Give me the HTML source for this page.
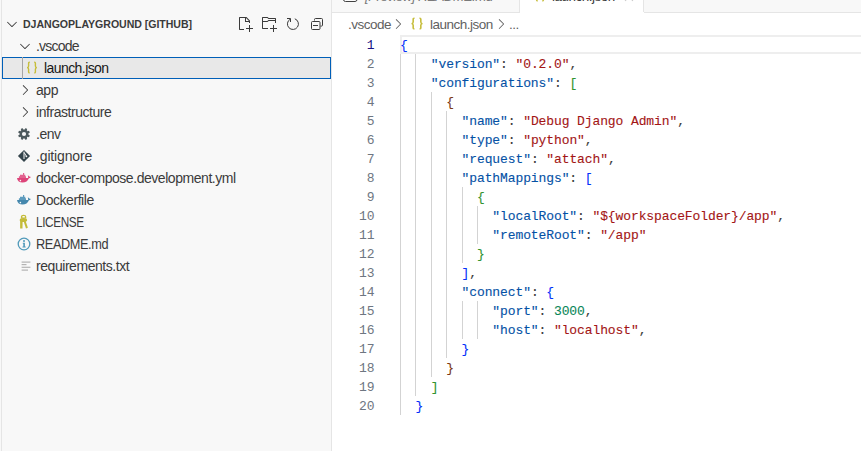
<!DOCTYPE html>
<html><head><meta charset="utf-8">
<style>
*{margin:0;padding:0;box-sizing:border-box}
html,body{width:861px;height:451px;overflow:hidden;background:#fff}
body{position:relative;font-family:"Liberation Sans",sans-serif}
#side{position:absolute;left:0;top:0;width:331px;height:451px;background:#f8f8f8}
.lb{position:absolute;left:1px;top:0;width:1px;height:451px;background:#e5e5e5}
.rb{position:absolute;left:331px;top:0;width:1px;height:451px;background:#e5e5e5}
.row{position:absolute;left:0;width:331px;height:22px;font-size:13px;color:#3b3b3b;line-height:22px;white-space:nowrap}
.t{position:absolute;top:0}
.row .t{font-size:14px;letter-spacing:-0.45px}
.hdr .t{font-size:10.6px;letter-spacing:-0.05px;top:1px}
.hdr{font-weight:bold;font-size:10.6px;letter-spacing:-0.05px}
#sel{position:absolute;left:2px;top:57px;width:329px;height:22px;background:#e8e8e8;border:1px solid #005fb8}
.tg{position:absolute;left:22px;width:1px;background:#a5a5a5}
.abs{position:absolute}
.tabbar{position:absolute;top:0;height:13px;background:#f8f8f8;border-bottom:1px solid #e5e5e5}
.tabt{position:absolute;font-size:13.5px;letter-spacing:-0.2px;white-space:nowrap;line-height:normal}
.ln{position:absolute;margin-top:1px;left:334px;width:40.4px;text-align:right;font-family:"Liberation Mono",monospace;font-size:13px;color:#6e7681;letter-spacing:-0.103px;line-height:19px;height:19px}
.act{color:#171184}
.cl{position:absolute;margin-top:1px;-webkit-text-stroke:0.1px currentColor;font-family:"Liberation Mono",monospace;font-size:13px;letter-spacing:-0.103px;line-height:19px;height:19px;white-space:pre;color:#3b3b3b}
.g{position:absolute;width:1px;background:#d3d3d3}
.hl{position:absolute;border:2px solid #eeeeee;border-right:none}
.k{color:#0451a5}.s{color:#a31515}.n{color:#098658}
.b1{color:#0431fa}.b2{color:#319331}.b3{color:#7b3814}
.bc{position:absolute;top:14px;height:22px;line-height:22px;font-size:13.5px;letter-spacing:-0.5px;color:#616161;white-space:nowrap}
.ic{position:absolute}

</style></head><body>
<div id="side">
<div class="lb"></div>
<div id="sel"></div>
<div class="tg" style="top:57px;height:22px"></div>
<svg class="ic" style="left:4px;top:16px" width="16" height="16" viewBox="0 0 16 16"><path fill="#3b3b3b" d="M7.976 10.072l4.357-4.357.62.618L8.284 11h-.618L3 6.333l.619-.618 4.357 4.357z"/></svg>
<div class="row hdr" style="top:12px"><span class="t" style="left:23px">DJANGOPLAYGROUND [GITHUB]</span></div>
<svg class="ic" style="left:237px;top:16px" width="16" height="16" viewBox="0 0 16 16"><path fill="#3b3b3b" d="M9.5 1.1l3.4 3.5.1.4v2h-1V6H8V2H3v11h4v1H2.5l-.5-.5v-12l.5-.5h6.7l.3.1zM9 2v3h2.9L9 2zm4 14h-1v-3H9v-1h3V9h1v3h3v1h-3v3z"/></svg>
<svg class="ic" style="left:261px;top:16px" width="16" height="16" viewBox="0 0 16 16"><path fill="#3b3b3b" d="M14.5 2H7.71l-.85-.85L6.51 1h-5l-.5.5v11l.5.5H7v-1H1.99V6h4.49l.35-.15.86-.86H14v1.5l-.001.51h1.011V2.5L14.5 2zm-.51 2h-6.5l-.35.15-.86.86H2v-3h4.29l.85.85.36.15H14l-.01.99zM13 16h-1v-3H9v-1h3V9h1v3h3v1h-3v3z"/></svg>
<svg class="ic" style="left:285px;top:16px" width="16" height="16" viewBox="0 0 16 16"><path fill="none" stroke="#3b3b3b" stroke-width="1" d="M5.2 3.2 A5.5 5.5 0 1 0 9.8 2.8"/><path fill="none" stroke="#3b3b3b" stroke-width="1" d="M2 2.5H5.5V6"/></svg>
<svg class="ic" style="left:309px;top:16px" width="16" height="16" viewBox="0 0 16 16"><path fill="none" stroke="#3b3b3b" stroke-width="1" d="M5.5 4.5V3.5a1 1 0 0 1 1-1h6a1 1 0 0 1 1 1v5.6a1 1 0 0 1-1 1H11.5"/><rect x="2.5" y="5.5" width="8.5" height="8" rx="1" fill="none" stroke="#3b3b3b"/><path fill="#3b3b3b" d="M4 9h5v1H4z"/></svg>

<svg class="ic" style="left:17px;top:38px" width="16" height="16" viewBox="0 0 16 16"><path fill="#3b3b3b" d="M7.976 10.072l4.357-4.357.62.618L8.284 11h-.618L3 6.333l.619-.618 4.357 4.357z"/></svg>
<div class="row" style="top:35px"><span class="t" style="left:36px;letter-spacing:-0.78px">.vscode</span></div>
<svg class="ic" style="left:24px;top:60px" width="16" height="16" viewBox="0 0 16 16"><path fill="none" stroke="#c6bd3a" stroke-width="1.4" d="M5.8 2.3h-.3c-.6 0-.9.4-.9 1v2.6c0 .9-.4 1.5-1.4 1.7 1 .2 1.4.8 1.4 1.7v2.6c0 .6.3 1 .9 1h.3M10.2 2.3h.3c.6 0 .9.4.9 1v2.6c0 .9.4 1.5 1.4 1.7-1 .2-1.4.8-1.4 1.7v2.6c0 .6-.3 1-.9 1h-.3"/></svg>
<div class="row" style="top:57px"><span class="t" style="left:44px;letter-spacing:-0.57px;color:#161616">launch.json</span></div>
<svg class="ic" style="left:17px;top:82px" width="16" height="16" viewBox="0 0 16 16"><path fill="#3b3b3b" d="M10.072 8.024L5.715 3.667l.618-.62L11 7.716v.618L6.333 13l-.618-.619 4.357-4.357z"/></svg>
<div class="row" style="top:79px"><span class="t" style="left:36px">app</span></div>
<svg class="ic" style="left:17px;top:104px" width="16" height="16" viewBox="0 0 16 16"><path fill="#3b3b3b" d="M10.072 8.024L5.715 3.667l.618-.62L11 7.716v.618L6.333 13l-.618-.619 4.357-4.357z"/></svg>
<div class="row" style="top:101px"><span class="t" style="left:36px">infrastructure</span></div>
<svg class="ic" style="left:16px;top:126px" width="16" height="16" viewBox="0 0 16 16"><g fill="#4d5a5e"><circle cx="8" cy="8" r="4.5"/><rect x="6.9" y="2.1" width="2.2" height="11.8" rx=".3" transform="rotate(22.5 8 8)"/><rect x="6.9" y="2.1" width="2.2" height="11.8" rx=".3" transform="rotate(67.5 8 8)"/><rect x="6.9" y="2.1" width="2.2" height="11.8" rx=".3" transform="rotate(112.5 8 8)"/><rect x="6.9" y="2.1" width="2.2" height="11.8" rx=".3" transform="rotate(157.5 8 8)"/></g><circle cx="8" cy="8" r="2.1" fill="#f8f8f8"/></svg>
<div class="row" style="top:123px"><span class="t" style="left:36px">.env</span></div>
<svg class="ic" style="left:16px;top:148px" width="16" height="16" viewBox="0 0 16 16"><path fill="#34444c" d="M8 1.9L14.1 8 8 14.1 1.9 8z"/><path fill="none" stroke="#f8f8f8" stroke-width="1" d="M8 3.6v7.4M8.2 4.6l2 3.3"/><circle cx="10.4" cy="8.3" r=".9" fill="#f8f8f8"/></svg>
<div class="row" style="top:145px"><span class="t" style="left:36px;letter-spacing:-0.15px">.gitignore</span></div>
<svg class="ic" style="left:16px;top:168px" width="16" height="16" viewBox="0 0 16 16"><path fill="#dd4479" d="M1 10H12.1C12.3 9.3 12.1 8.4 11.8 7.2 12.5 7.5 13.3 8.1 13.7 8.8 14.2 8.7 14.6 8.9 14.7 9.2 14.2 9.8 13.6 10.2 12.9 10.3 12 13.1 9.6 14.6 6.6 14.6 3.6 14.6 1.4 13 1 10z"/><path fill="#e2628f" d="M2.9 8.2h7.1V10H2.9zM4 6.8h5.3v1.4H4zM7 5h1.2v1.8H7z"/><circle cx="4.4" cy="12.6" r=".8" fill="#f8f8f8"/></svg>
<div class="row" style="top:167px"><span class="t" style="left:36px">docker-compose.development.yml</span></div>
<svg class="ic" style="left:16px;top:190px" width="16" height="16" viewBox="0 0 16 16"><path fill="#4487ad" d="M1 10H12.1C12.3 9.3 12.1 8.4 11.8 7.2 12.5 7.5 13.3 8.1 13.7 8.8 14.2 8.7 14.6 8.9 14.7 9.2 14.2 9.8 13.6 10.2 12.9 10.3 12 13.1 9.6 14.6 6.6 14.6 3.6 14.6 1.4 13 1 10z"/><path fill="#5e9bbd" d="M2.9 8.2h7.1V10H2.9zM4 6.8h5.3v1.4H4zM7 5h1.2v1.8H7z"/><circle cx="4.4" cy="12.6" r=".8" fill="#f8f8f8"/></svg>
<div class="row" style="top:189px"><span class="t" style="left:36px">Dockerfile</span></div>
<svg class="ic" style="left:16px;top:212px" width="16" height="17" viewBox="0 0 16 17"><g fill="#c3bb38"><path d="M4.9 4.8a2.7 2.1 0 0 1 5.4 0v1.6H4.9z"/><ellipse cx="7.4" cy="8" rx="3.7" ry="2"/><path d="M4.1 8.8h2.5l-.1 7.8H4.1z"/><path d="M7.6 9.3l2-.3 2.3 6.8-1.9.6z"/></g><rect x="6.3" y="4" width="2.6" height="1.5" rx=".6" fill="#f8f8f8"/></svg>
<div class="row" style="top:211px"><span class="t" style="left:36px;transform:scaleX(0.84);transform-origin:0 0">LICENSE</span></div>
<svg class="ic" style="left:16px;top:236px" width="16" height="16" viewBox="0 0 16 16"><circle cx="8" cy="8" r="5.8" fill="none" stroke="#519aba" stroke-width="1.3"/><circle cx="8" cy="4.9" r="1" fill="#519aba"/><path fill="#519aba" d="M6.8 6.7h2.1v3.8h.8v1H6.5v-1h.8V7.7h-.5z"/></svg>
<div class="row" style="top:233px"><span class="t" style="left:36px;transform:scaleX(0.91);transform-origin:0 0">README.md</span></div>
<svg class="ic" style="left:16px;top:258px" width="16" height="16" viewBox="0 0 16 16"><g fill="#b3b3b3"><rect x="5.6" y="3.5" width="8.8" height="1.2"/><rect x="5.6" y="6" width="4.9" height="1.2"/><rect x="5.6" y="8.7" width="8.8" height="1.2"/><rect x="5.6" y="11.5" width="6.4" height="1.2"/></g></svg>
<div class="row" style="top:255px"><span class="t" style="left:36px">requirements.txt</span></div>
<div class="rb"></div>
</div>
<div class="tabbar" style="left:332px;width:188px"></div>
<div class="abs" style="left:519px;top:0;width:1px;height:13px;background:#e5e5e5"></div>
<div class="abs" style="left:643px;top:0;width:1px;height:12px;background:#e5e5e5"></div>
<div class="tabbar" style="left:644px;width:217px"></div>
<svg class="ic" style="left:343px;top:-12px" width="15" height="15" viewBox="0 0 15 15"><rect x=".5" y="1" width="13.5" height="12.5" rx="2" fill="#fcfcfc" stroke="#424242" stroke-width="1"/></svg>
<div class="tabt" style="left:365px;top:-11px;color:#7a7a7a;font-style:italic;letter-spacing:-0.62px">[Preview] README.md</div>
<svg class="ic" style="left:532px;top:-12px" width="16" height="16" viewBox="0 0 16 16"><path fill="none" stroke="#c6bd3a" stroke-width="1.4" d="M5.8 2.3h-.3c-.6 0-.9.4-.9 1v2.6c0 .9-.4 1.5-1.4 1.7 1 .2 1.4.8 1.4 1.7v2.6c0 .6.3 1 .9 1h.3M10.2 2.3h.3c.6 0 .9.4.9 1v2.6c0 .9.4 1.5 1.4 1.7-1 .2-1.4.8-1.4 1.7v2.6c0 .6-.3 1-.9 1h-.3"/></svg>
<div class="tabt" style="left:552px;top:-11px;color:#3b3b3b;letter-spacing:-0.5px">launch.json</div>
<svg class="ic" style="left:621px;top:-11.5px" width="16" height="16" viewBox="0 0 16 16"><path fill="#c8c8c8" d="M8 8.707l3.646 3.647.708-.707L8.707 8l3.647-3.646-.707-.708L8 7.293 4.354 3.646l-.707.708L7.293 8l-3.646 3.646.707.708L8 8.707z"/></svg>

<div class="bc" style="left:348px">.vscode</div>
<svg class="ic" style="left:390px;top:16px" width="16" height="16" viewBox="0 0 16 16"><path fill="#616161" d="M10.072 8.024L5.715 3.667l.618-.62L11 7.716v.618L6.333 13l-.618-.619 4.357-4.357z"/></svg>
<svg class="ic" style="left:407.6px;top:16px" width="18" height="16" viewBox="0 0 16 16" preserveAspectRatio="none"><path fill="none" stroke="#c6bd3a" stroke-width="1.4" d="M5.8 2.3h-.3c-.6 0-.9.4-.9 1v2.6c0 .9-.4 1.5-1.4 1.7 1 .2 1.4.8 1.4 1.7v2.6c0 .6.3 1 .9 1h.3M10.2 2.3h.3c.6 0 .9.4.9 1v2.6c0 .9.4 1.5 1.4 1.7-1 .2-1.4.8-1.4 1.7v2.6c0 .6-.3 1-.9 1h-.3"/></svg>
<div class="bc" style="left:430px">launch.json</div>
<svg class="ic" style="left:493px;top:16px" width="16" height="16" viewBox="0 0 16 16"><path fill="#616161" d="M10.072 8.024L5.715 3.667l.618-.62L11 7.716v.618L6.333 13l-.618-.619 4.357-4.357z"/></svg>
<div class="bc" style="left:509px">...</div>
<div class="hl" style="left:400px;top:35px;width:463px;height:19px"></div>
<div class="g" style="left:400px;top:54px;height:19px"></div><div class="g" style="left:415px;top:54px;height:19px"></div><div class="g" style="left:400px;top:73px;height:19px"></div><div class="g" style="left:415px;top:73px;height:19px"></div><div class="g" style="left:400px;top:92px;height:19px"></div><div class="g" style="left:415px;top:92px;height:19px"></div><div class="g" style="left:431px;top:92px;height:19px"></div><div class="g" style="left:400px;top:111px;height:19px"></div><div class="g" style="left:415px;top:111px;height:19px"></div><div class="g" style="left:431px;top:111px;height:19px"></div><div class="g" style="left:446px;top:111px;height:19px"></div><div class="g" style="left:400px;top:130px;height:19px"></div><div class="g" style="left:415px;top:130px;height:19px"></div><div class="g" style="left:431px;top:130px;height:19px"></div><div class="g" style="left:446px;top:130px;height:19px"></div><div class="g" style="left:400px;top:149px;height:19px"></div><div class="g" style="left:415px;top:149px;height:19px"></div><div class="g" style="left:431px;top:149px;height:19px"></div><div class="g" style="left:446px;top:149px;height:19px"></div><div class="g" style="left:400px;top:168px;height:19px"></div><div class="g" style="left:415px;top:168px;height:19px"></div><div class="g" style="left:431px;top:168px;height:19px"></div><div class="g" style="left:446px;top:168px;height:19px"></div><div class="g" style="left:400px;top:187px;height:19px"></div><div class="g" style="left:415px;top:187px;height:19px"></div><div class="g" style="left:431px;top:187px;height:19px"></div><div class="g" style="left:446px;top:187px;height:19px"></div><div class="g" style="left:462px;top:187px;height:19px"></div><div class="g" style="left:400px;top:206px;height:19px"></div><div class="g" style="left:415px;top:206px;height:19px"></div><div class="g" style="left:431px;top:206px;height:19px"></div><div class="g" style="left:446px;top:206px;height:19px"></div><div class="g" style="left:462px;top:206px;height:19px"></div><div class="g" style="left:477px;top:206px;height:19px"></div><div class="g" style="left:400px;top:225px;height:19px"></div><div class="g" style="left:415px;top:225px;height:19px"></div><div class="g" style="left:431px;top:225px;height:19px"></div><div class="g" style="left:446px;top:225px;height:19px"></div><div class="g" style="left:462px;top:225px;height:19px"></div><div class="g" style="left:477px;top:225px;height:19px"></div><div class="g" style="left:400px;top:244px;height:19px"></div><div class="g" style="left:415px;top:244px;height:19px"></div><div class="g" style="left:431px;top:244px;height:19px"></div><div class="g" style="left:446px;top:244px;height:19px"></div><div class="g" style="left:462px;top:244px;height:19px"></div><div class="g" style="left:400px;top:263px;height:19px"></div><div class="g" style="left:415px;top:263px;height:19px"></div><div class="g" style="left:431px;top:263px;height:19px"></div><div class="g" style="left:446px;top:263px;height:19px"></div><div class="g" style="left:400px;top:282px;height:19px"></div><div class="g" style="left:415px;top:282px;height:19px"></div><div class="g" style="left:431px;top:282px;height:19px"></div><div class="g" style="left:446px;top:282px;height:19px"></div><div class="g" style="left:400px;top:301px;height:19px"></div><div class="g" style="left:415px;top:301px;height:19px"></div><div class="g" style="left:431px;top:301px;height:19px"></div><div class="g" style="left:446px;top:301px;height:19px"></div><div class="g" style="left:462px;top:301px;height:19px"></div><div class="g" style="left:477px;top:301px;height:19px"></div><div class="g" style="left:400px;top:320px;height:19px"></div><div class="g" style="left:415px;top:320px;height:19px"></div><div class="g" style="left:431px;top:320px;height:19px"></div><div class="g" style="left:446px;top:320px;height:19px"></div><div class="g" style="left:462px;top:320px;height:19px"></div><div class="g" style="left:477px;top:320px;height:19px"></div><div class="g" style="left:400px;top:339px;height:19px"></div><div class="g" style="left:415px;top:339px;height:19px"></div><div class="g" style="left:431px;top:339px;height:19px"></div><div class="g" style="left:446px;top:339px;height:19px"></div><div class="g" style="left:400px;top:358px;height:19px"></div><div class="g" style="left:415px;top:358px;height:19px"></div><div class="g" style="left:431px;top:358px;height:19px"></div><div class="g" style="left:400px;top:377px;height:19px"></div><div class="g" style="left:415px;top:377px;height:19px"></div><div class="g" style="left:400px;top:396px;height:19px"></div>
<div class="ln act" style="top:35px">1</div><div class="cl" style="top:35px;left:400.00px"><span class="b1">{</span></div>
<div class="ln" style="top:54px">2</div><div class="cl" style="top:54px;left:430.79px"><span class="k">&quot;version&quot;</span>: <span class="s">&quot;0.2.0&quot;</span>,</div>
<div class="ln" style="top:73px">3</div><div class="cl" style="top:73px;left:430.79px"><span class="k">&quot;configurations&quot;</span>: <span class="b2">[</span></div>
<div class="ln" style="top:92px">4</div><div class="cl" style="top:92px;left:446.18px"><span class="b3">{</span></div>
<div class="ln" style="top:111px">5</div><div class="cl" style="top:111px;left:461.58px"><span class="k">&quot;name&quot;</span>: <span class="s">&quot;Debug Django Admin&quot;</span>,</div>
<div class="ln" style="top:130px">6</div><div class="cl" style="top:130px;left:461.58px"><span class="k">&quot;type&quot;</span>: <span class="s">&quot;python&quot;</span>,</div>
<div class="ln" style="top:149px">7</div><div class="cl" style="top:149px;left:461.58px"><span class="k">&quot;request&quot;</span>: <span class="s">&quot;attach&quot;</span>,</div>
<div class="ln" style="top:168px">8</div><div class="cl" style="top:168px;left:461.58px"><span class="k">&quot;pathMappings&quot;</span>: <span class="b1">[</span></div>
<div class="ln" style="top:187px">9</div><div class="cl" style="top:187px;left:476.97px"><span class="b2">{</span></div>
<div class="ln" style="top:206px">10</div><div class="cl" style="top:206px;left:492.36px"><span class="k">&quot;localRoot&quot;</span>: <span class="s">&quot;${workspaceFolder}/app&quot;</span>,</div>
<div class="ln" style="top:225px">11</div><div class="cl" style="top:225px;left:492.36px"><span class="k">&quot;remoteRoot&quot;</span>: <span class="s">&quot;/app&quot;</span></div>
<div class="ln" style="top:244px">12</div><div class="cl" style="top:244px;left:476.97px"><span class="b2">}</span></div>
<div class="ln" style="top:263px">13</div><div class="cl" style="top:263px;left:461.58px"><span class="b1">]</span>,</div>
<div class="ln" style="top:282px">14</div><div class="cl" style="top:282px;left:461.58px"><span class="k">&quot;connect&quot;</span>: <span class="b1">{</span></div>
<div class="ln" style="top:301px">15</div><div class="cl" style="top:301px;left:492.36px"><span class="k">&quot;port&quot;</span>: <span class="n">3000</span>,</div>
<div class="ln" style="top:320px">16</div><div class="cl" style="top:320px;left:492.36px"><span class="k">&quot;host&quot;</span>: <span class="s">&quot;localhost&quot;</span>,</div>
<div class="ln" style="top:339px">17</div><div class="cl" style="top:339px;left:461.58px"><span class="b1">}</span></div>
<div class="ln" style="top:358px">18</div><div class="cl" style="top:358px;left:446.18px"><span class="b3">}</span></div>
<div class="ln" style="top:377px">19</div><div class="cl" style="top:377px;left:430.79px"><span class="b2">]</span></div>
<div class="ln" style="top:396px">20</div><div class="cl" style="top:396px;left:415.39px"><span class="b1">}</span></div>
</body></html>
